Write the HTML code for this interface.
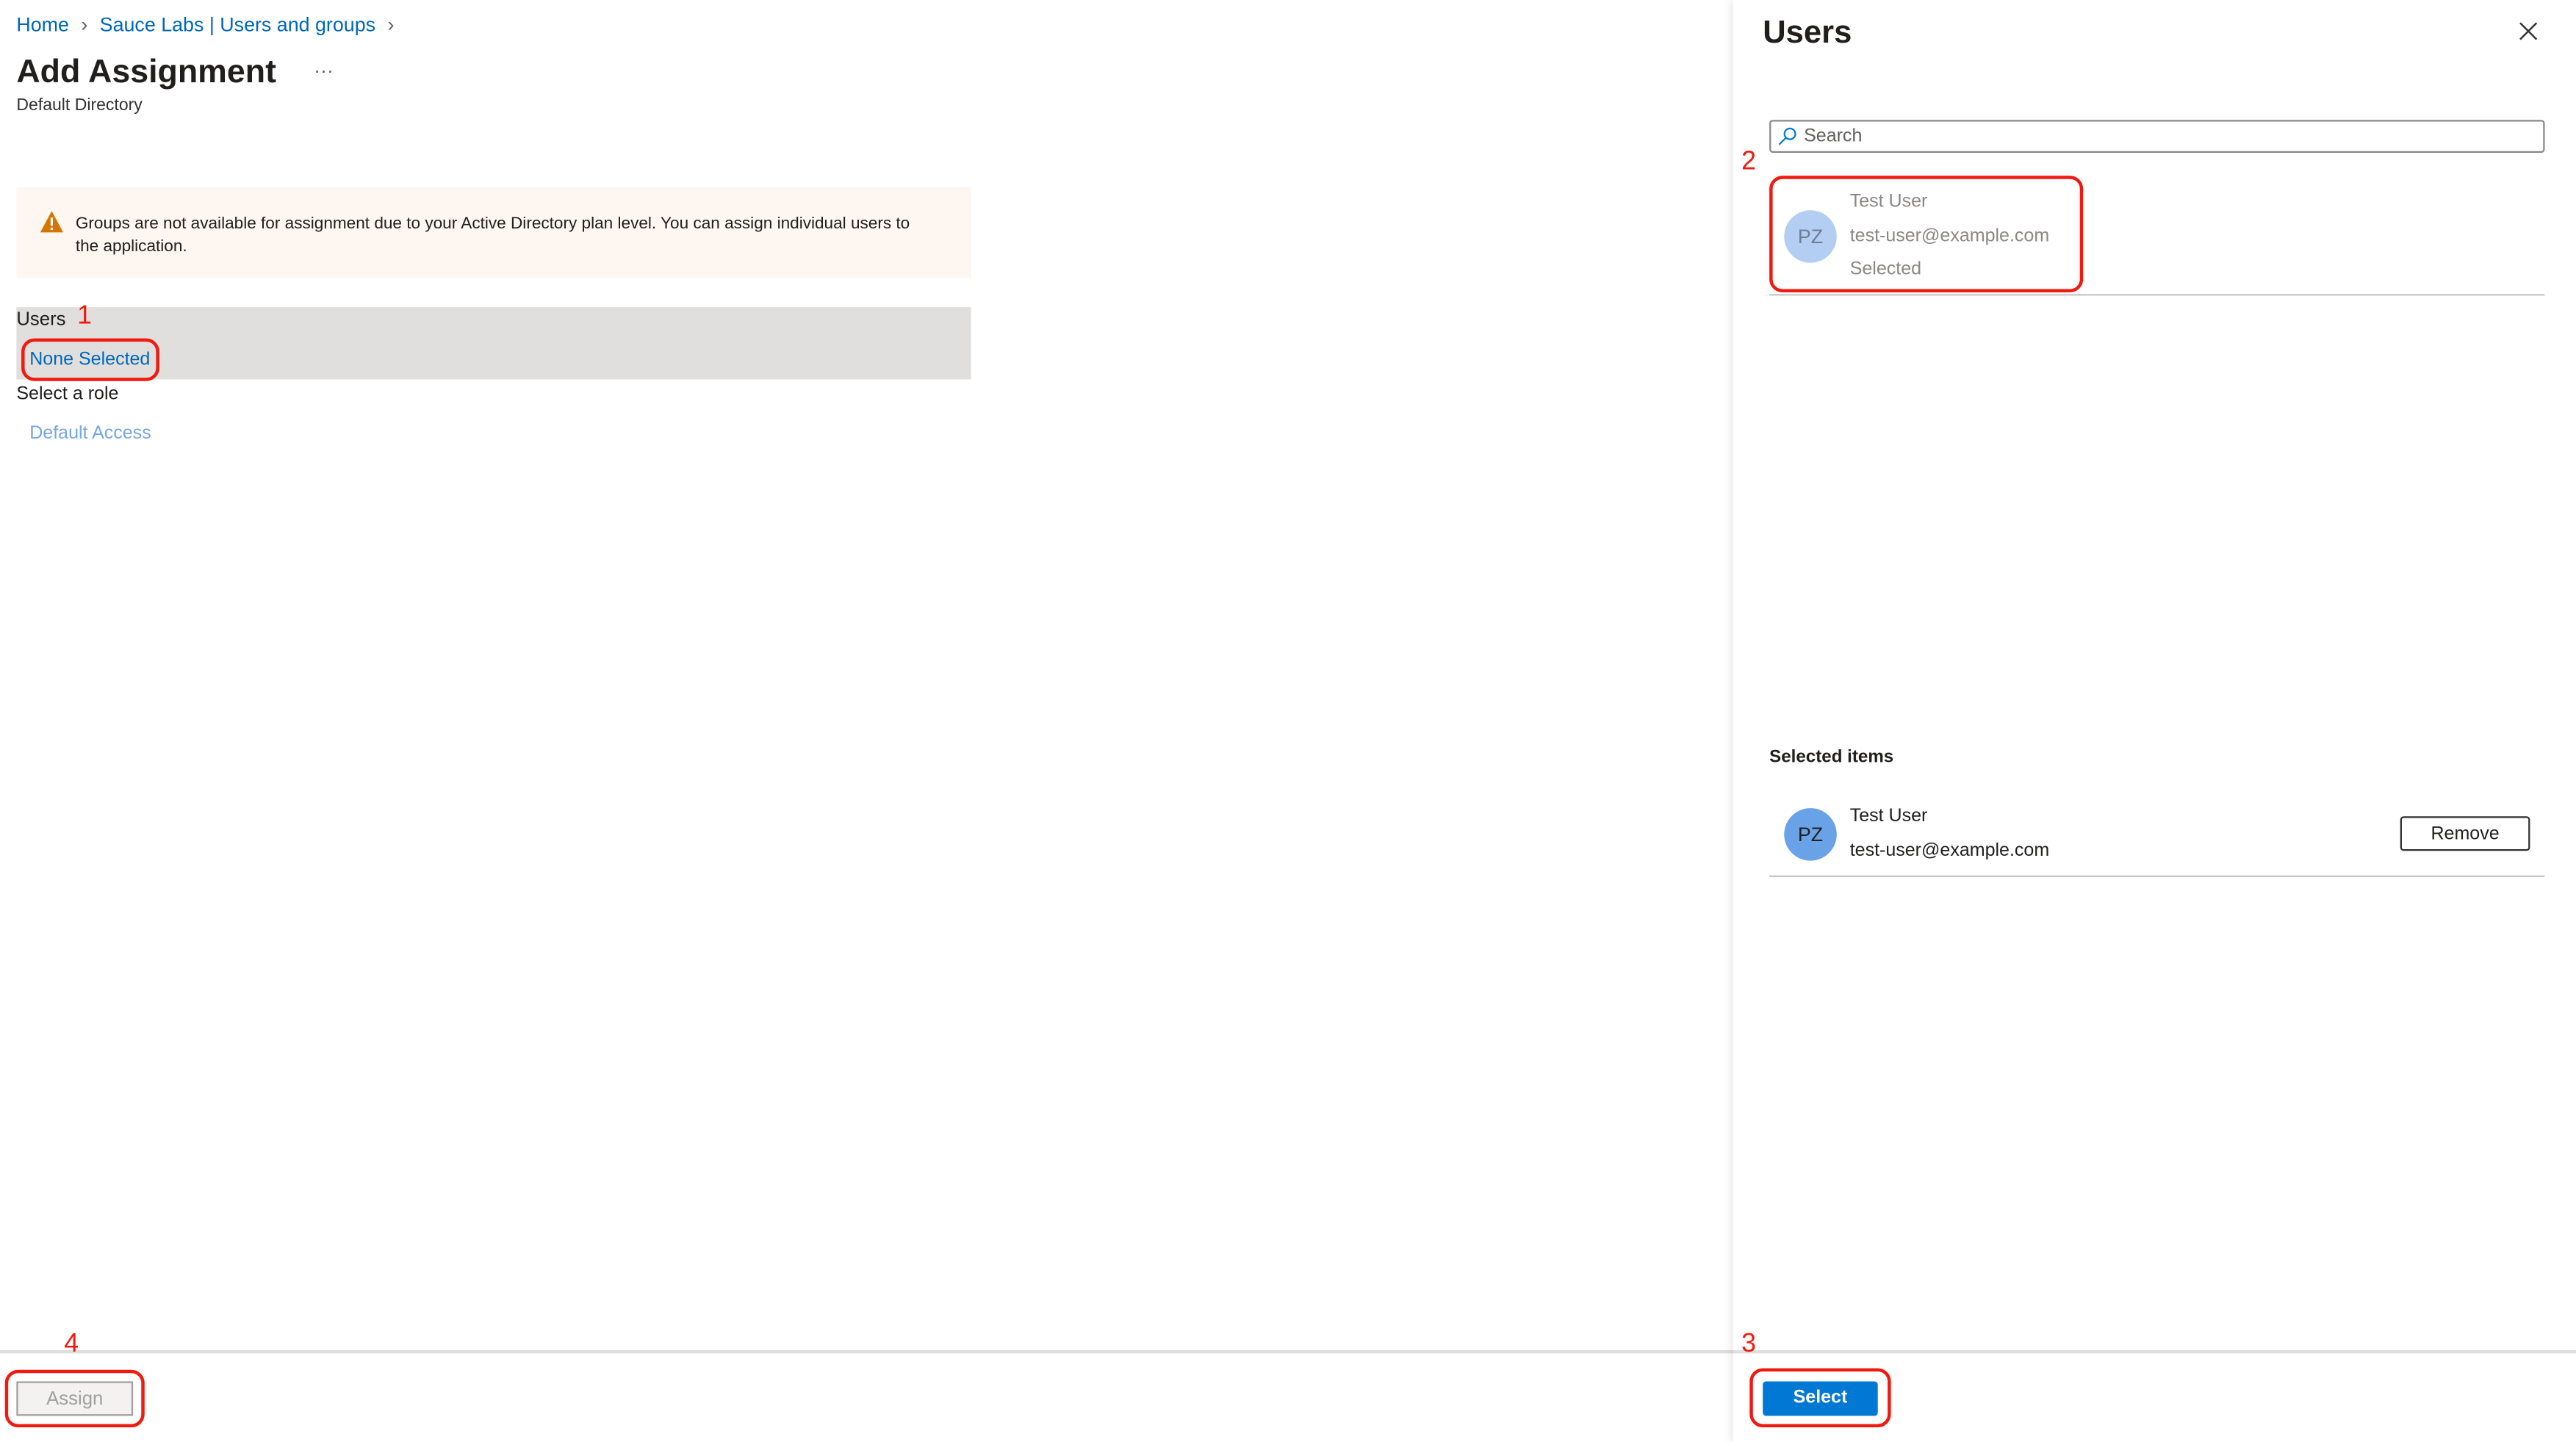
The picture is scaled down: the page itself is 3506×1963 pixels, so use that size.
<!DOCTYPE html>
<html><head><meta charset="utf-8"><style>
html,body{margin:0;padding:0;background:#fff;overflow:hidden;width:3506px;height:1962px}
#w{position:absolute;left:0;top:0;width:1568px;height:878px;transform:scale(2.23597);transform-origin:0 0;font-family:"Liberation Sans",sans-serif;color:#323130}
.a{position:absolute;white-space:nowrap}
.red{border:2px solid #f01a10;border-radius:8px;position:absolute;box-sizing:border-box}
.num{position:absolute;color:#f01a10;font-size:16px;line-height:16px}
</style></head><body><div id="w">
<div class="a" style="left:10px;top:8px;font-size:12px;color:#0067b8">Home <span style="color:#605e5c;margin:0 4px">›</span> Sauce Labs | Users and groups <span style="color:#605e5c;margin-left:4px">›</span></div>
<div class="a" style="left:10px;top:33px;font-size:20px;font-weight:bold;color:#201f1e">Add Assignment</div>
<div class="a" style="left:191px;top:36px;font-size:12px;color:#605e5c">···</div>
<div class="a" style="left:10px;top:59px;font-size:10.3px;color:#323130">Default Directory</div>
<div class="a" style="left:10px;top:114px;width:581px;height:55px;background:#fdf6f1"></div>
<svg class="a" style="left:24px;top:128px" width="15" height="14" viewBox="0 0 15 14"><path d="M7.5 0.5L14.5 13.5H0.5Z" fill="#d47500"/><rect x="6.8" y="4.5" width="1.4" height="5" fill="#fff"/><rect x="6.8" y="10.6" width="1.4" height="1.4" fill="#fff"/></svg>
<div class="a" style="left:46px;top:130px;font-size:10.1px;line-height:13.5px;color:#201f1e;white-space:normal;width:518px">Groups are not available for assignment due to your Active Directory plan level. You can assign individual users to the application.</div>
<div class="a" style="left:10px;top:187px;width:581px;height:44px;background:#e0dfde"></div>
<div class="a" style="left:10px;top:189px;font-size:11.5px;color:#201f1e">Users</div>
<div class="num" style="left:47px;top:185px">1</div>
<div class="a" style="left:18px;top:213px;font-size:11.2px;color:#0067b8">None Selected</div>
<div class="red" style="left:13px;top:206px;width:84px;height:26px"></div>
<div class="a" style="left:10px;top:234px;font-size:11.2px;color:#201f1e">Select a role</div>
<div class="a" style="left:18px;top:258px;font-size:11.2px;color:#76a7e0">Default Access</div>
<div class="a" style="left:0;top:822px;width:1568px;height:2px;background:#e1dfdd"></div>
<div class="num" style="left:39px;top:811px">4</div>
<div class="a" style="left:10px;top:841px;width:71px;height:21px;box-sizing:border-box;background:#f3f2f1;border:1px solid #a19f9d;font-size:11.5px;color:#a19f9d;text-align:center;line-height:20px">Assign</div>
<div class="red" style="left:3px;top:834px;width:85px;height:35px"></div>
<div class="a" style="left:1055px;top:0;width:513px;height:878px;background:#fff;box-shadow:-2px 0 4px rgba(0,0,0,0.08)"></div>
<div class="a" style="left:1055px;top:822px;width:513px;height:2px;background:#e1dfdd"></div>
<div class="a" style="left:1073px;top:9px;font-size:19.5px;font-weight:bold;color:#201f1e">Users</div>
<svg class="a" style="left:1533px;top:13px" width="12" height="12"><path d="M1 1L11 11M11 1L1 11" stroke="#323130" stroke-width="1.1"/></svg>
<div class="a" style="left:1077px;top:73px;width:472px;height:20px;box-sizing:border-box;border:1px solid #8a8886;border-radius:2px"></div>
<svg class="a" style="left:1082px;top:77px" width="12" height="12"><circle cx="7.5" cy="4.5" r="3.3" fill="none" stroke="#0078d4" stroke-width="1"/><path d="M5.2 6.8L1 11" stroke="#0078d4" stroke-width="1"/></svg>
<div class="a" style="left:1098px;top:77px;font-size:11.2px;color:#605e5c">Search</div>
<div class="num" style="left:1060px;top:91px">2</div>
<div class="a" style="left:1086px;top:128px;width:32px;height:32px;border-radius:50%;background:#b4cdf3;font-size:12px;color:#6f7d91;text-align:center;line-height:32px">PZ</div>
<div class="a" style="left:1126px;top:117px;font-size:11.2px;color:#8a8886">Test User</div>
<div class="a" style="left:1126px;top:138px;font-size:11.2px;color:#8a8886">test-user@example.com</div>
<div class="a" style="left:1126px;top:158px;font-size:11.2px;color:#8a8886">Selected</div>
<div class="red" style="left:1077px;top:107px;width:191px;height:71px"></div>
<div class="a" style="left:1077px;top:179px;width:472px;height:1px;background:#c8c6c4"></div>
<div class="a" style="left:1077px;top:455px;font-size:10.8px;font-weight:bold;color:#201f1e">Selected items</div>
<div class="a" style="left:1086px;top:492px;width:32px;height:32px;border-radius:50%;background:#6aa2e8;font-size:12px;color:#201f1e;text-align:center;line-height:32px">PZ</div>
<div class="a" style="left:1126px;top:491px;font-size:11.2px;color:#201f1e">Test User</div>
<div class="a" style="left:1126px;top:512px;font-size:11.2px;color:#201f1e">test-user@example.com</div>
<div class="a" style="left:1461px;top:497px;width:79px;height:21px;box-sizing:border-box;border:1px solid #323130;border-radius:2px;font-size:11.2px;color:#201f1e;text-align:center;line-height:20px">Remove</div>
<div class="a" style="left:1077px;top:533px;width:472px;height:1px;background:#c8c6c4"></div>
<div class="num" style="left:1060px;top:811px">3</div>
<div class="a" style="left:1073px;top:841px;width:70px;height:21px;background:#0078d4;border-radius:2px;font-size:11.2px;font-weight:bold;color:#fff;text-align:center;line-height:21px">Select</div>
<div class="red" style="left:1065px;top:833px;width:86px;height:36px"></div>
</div></body></html>
